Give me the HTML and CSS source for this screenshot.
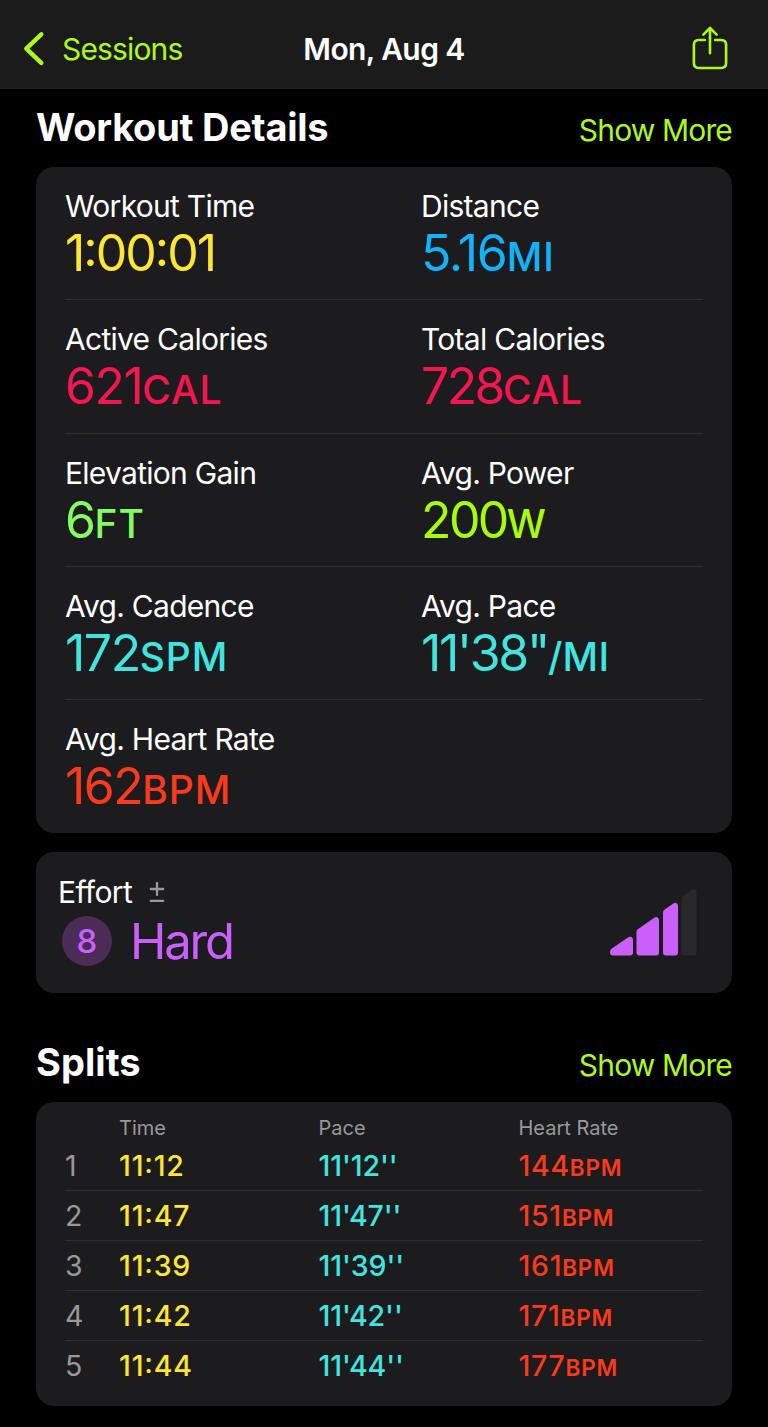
FILE: index.html
```html
<!DOCTYPE html>
<html lang="en">
<head>
    <meta charset="UTF-8">
    <meta name="viewport" content="width=device-width, initial-scale=1.0">
    <title>Workout - Mon, Aug 4</title>
    <link rel="stylesheet" href="styles.css">
</head>
<body>
    <header class="navbar">
        <a class="back">
            <svg class="chevron" width="24" height="36" viewBox="0 0 24 36" fill="none" stroke="currentColor" stroke-width="4.4" stroke-linecap="round" stroke-linejoin="round">
                <path d="M19.3 3.3 L4.3 17.6 L19.3 31.9"/>
            </svg>
            <span>Sessions</span>
        </a>
        <h1>Mon, Aug 4</h1>
        <a class="share">
            <svg width="36" height="46" viewBox="0 0 36 46" fill="none" stroke="currentColor" stroke-width="2.6" stroke-linecap="round" stroke-linejoin="round">
                <path d="M12.8 14 H6.8 Q1.9 14 1.9 18.9 V37.1 Q1.9 42 6.8 42 H29.2 Q34.1 42 34.1 37.1 V18.9 Q34.1 14 29.2 14 H23.2"/>
                <path d="M18 27.2 V2.2 M11.4 8.6 L18 1.8 L24.6 8.6"/>
            </svg>
        </a>
    </header>

    <main>
        <div class="section-header">
            <h2>Workout Details</h2>
            <a class="show-more">Show More</a>
        </div>

        <section class="card details">
            <div class="row">
                <div class="metric">
                    <div class="label">Workout Time</div>
                    <div class="value time">1:00:01</div>
                </div>
                <div class="metric">
                    <div class="label">Distance</div>
                    <div class="value distance">5.16<span class="unit">MI</span></div>
                </div>
            </div>
            <div class="row">
                <div class="metric">
                    <div class="label">Active Calories</div>
                    <div class="value calories">621<span class="unit">CAL</span></div>
                </div>
                <div class="metric">
                    <div class="label">Total Calories</div>
                    <div class="value calories total">728<span class="unit">CAL</span></div>
                </div>
            </div>
            <div class="row">
                <div class="metric">
                    <div class="label">Elevation Gain</div>
                    <div class="value elevation">6<span class="unit">FT</span></div>
                </div>
                <div class="metric">
                    <div class="label">Avg. Power</div>
                    <div class="value power">200<span class="unit">W</span></div>
                </div>
            </div>
            <div class="row">
                <div class="metric">
                    <div class="label">Avg. Cadence</div>
                    <div class="value pace">172<span class="unit">SPM</span></div>
                </div>
                <div class="metric">
                    <div class="label">Avg. Pace</div>
                    <div class="value pace avg-pace">11'38"<span class="unit">/MI</span></div>
                </div>
            </div>
            <div class="row">
                <div class="metric">
                    <div class="label">Avg. Heart Rate</div>
                    <div class="value heart">162<span class="unit">BPM</span></div>
                </div>
            </div>
        </section>

        <section class="card effort">
            <div>
                <div class="effort-label">
                    <span>Effort</span>
                    <svg width="16" height="22" viewBox="0 0 16 22" fill="none" stroke="currentColor" stroke-width="2.3" stroke-linecap="round">
                        <path d="M8 2 V14 M1.8 8 H14.2 M1.8 19.8 H14.2"/>
                    </svg>
                </div>
                <div class="effort-value">
                    <span class="badge">8</span>
                    <span class="effort-name">Hard</span>
                </div>
            </div>
            <svg class="bars" width="88" height="68" viewBox="0 0 88 68" stroke-width="6" stroke-linejoin="round">
                <g class="bar-on">
                    <path d="M3 63.5 L3.2 62.2 L20 50.8 V63.5 Z"/>
                    <path d="M29.5 42.8 L46 31.2 V63.5 H29.5 Z"/>
                    <path d="M56 23.2 L65 17 V63.5 H56 Z"/>
                </g>
                <path class="bar-off" d="M74.5 9.6 L83.5 3.2 V63.5 H74.5 Z"/>
            </svg>
        </section>

        <div class="section-header splits-header">
            <h2 class="splits-title">Splits</h2>
            <a class="show-more">Show More</a>
        </div>

        <section class="card splits">
            <div class="split split-head">
                <span></span><span>Time</span><span>Pace</span><span>Heart Rate</span>
            </div>
            <div class="split">
                <span class="num">1</span><span class="time">11:12</span><span class="pace">11'12''</span><span class="heart">144<span class="unit">BPM</span></span>
            </div>
            <div class="split">
                <span class="num">2</span><span class="time">11:47</span><span class="pace">11'47''</span><span class="heart">151<span class="unit">BPM</span></span>
            </div>
            <div class="split">
                <span class="num">3</span><span class="time">11:39</span><span class="pace">11'39''</span><span class="heart">161<span class="unit">BPM</span></span>
            </div>
            <div class="split">
                <span class="num">4</span><span class="time">11:42</span><span class="pace">11'42''</span><span class="heart">171<span class="unit">BPM</span></span>
            </div>
            <div class="split">
                <span class="num">5</span><span class="time">11:44</span><span class="pace">11'44''</span><span class="heart">177<span class="unit">BPM</span></span>
            </div>
        </section>
    </main>
</body>
</html>
```
FILE: styles.css
```css
* {
    box-sizing: border-box;
}

body {
    font-family: 'Inter', 'Liberation Sans', sans-serif;
    margin: 0;
    background-color: #000;
    color: #fff;
}

svg {
    display: block;
}

.navbar {
    display: grid;
    grid-template-columns: 1fr auto 1fr;
    align-items: center;
    height: 89px;
    padding: 9px 22px 0;
    background-color: #1b1b1b;
    border-bottom: 1px solid #212121;
}

.back {
    display: flex;
    align-items: center;
    gap: 16px;
    font-size: 30px;
    letter-spacing: -0.85px;
    color: #adf91c;
}

.share {
    justify-self: end;
    margin-right: 18px;
    color: #adf91c;
}

h1 {
    margin: 0;
    font-size: 30px;
    font-weight: 600;
    letter-spacing: -0.6px;
}

main {
    padding: 0 36px;
}

.section-header {
    display: flex;
    justify-content: space-between;
    align-items: baseline;
    height: 78px;
    padding-top: 14px;
}

.splits-header {
    height: 109px;
    padding-top: 45px;
}

h2 {
    margin: 0;
    font-size: 38px;
    line-height: 48px;
    font-weight: 700;
    letter-spacing: -0.25px;
}

.splits-title {
    letter-spacing: 0.05px;
}

.show-more {
    font-size: 30px;
    letter-spacing: -0.85px;
    color: #adf91c;
}

.card {
    background-color: #1c1c1e;
    border-radius: 18px;
}

.details {
    height: 666px;
    padding: 0 29px;
}

.row {
    display: grid;
    grid-template-columns: 356px 1fr;
    height: 133.3px;
    padding-top: 21px;
    border-bottom: 1px solid #303032;
}

.row:last-child {
    border-bottom: none;
}

.label {
    font-size: 30px;
    line-height: 36px;
    letter-spacing: -0.72px;
}

.value {
    font-size: 50px;
    line-height: 58px;
    letter-spacing: -1.5px;
}

.value .unit {
    font-size: 39px;
    font-weight: 500;
    letter-spacing: 0.9px;
}

.time {
    color: #fde630;
    font-feature-settings: 'case';
}

.value.time {
    letter-spacing: -2px;
}

.distance {
    color: #0fb4fa;
    letter-spacing: -1.2px;
}

.calories {
    color: #f5154f;
}

.calories.total {
    letter-spacing: -2.6px;
}

.elevation {
    color: #83fb64;
}

.power {
    color: #a8fb0a;
    letter-spacing: -2.6px;
}

.pace {
    color: #40e5e0;
}

.avg-pace {
    letter-spacing: -2.3px;
}

.value.avg-pace .unit {
    letter-spacing: 0.2px;
}

.heart {
    color: #f93a1d;
}

.effort {
    display: flex;
    justify-content: space-between;
    height: 141px;
    margin-top: 19px;
    padding: 21px 34px 0 22px;
}

.effort-label {
    display: flex;
    align-items: center;
    gap: 17px;
    font-size: 30px;
    line-height: 38px;
    letter-spacing: -0.6px;
}

.effort-label svg {
    color: #98989d;
}

.effort-value {
    display: flex;
    align-items: center;
    gap: 18px;
    height: 60px;
    padding-left: 4px;
}

.badge {
    width: 50px;
    height: 50px;
    border-radius: 50%;
    background-color: #4a2c56;
    color: #cb61fb;
    font-size: 33px;
    font-weight: 500;
    line-height: 50px;
    text-align: center;
}

.effort-name {
    padding-top: 2px;
    color: #cb5ffc;
    font-size: 49px;
    line-height: 60px;
    letter-spacing: -2.2px;
}

.bars {
    margin-top: 16px;
}

.bar-on {
    fill: #cb5ffc;
    stroke: #cb5ffc;
}

.bar-off {
    fill: #29292b;
    stroke: #29292b;
}

.splits {
    height: 304px;
    padding: 0 29px;
}

.split {
    display: grid;
    grid-template-columns: 54px 199.5px 200px 1fr;
    height: 50.2px;
    line-height: 50px;
    font-size: 28.5px;
    font-weight: 500;
    border-bottom: 1px solid #303032;
}

.split-head {
    height: 38.6px;
    padding-top: 8px;
    line-height: 36px;
    font-size: 20px;
    font-weight: 400;
    color: #98989d;
    border-bottom: none;
}

.split:last-child {
    border-bottom: none;
}

.num {
    font-weight: 400;
    color: #98989d;
}

.split .time {
    letter-spacing: 0.8px;
}

.split .pace {
    letter-spacing: -0.1px;
}

.split .heart {
    letter-spacing: 0.7px;
}

.split .unit {
    font-size: 22.5px;
    font-weight: 600;
    letter-spacing: 0.8px;
}
```
